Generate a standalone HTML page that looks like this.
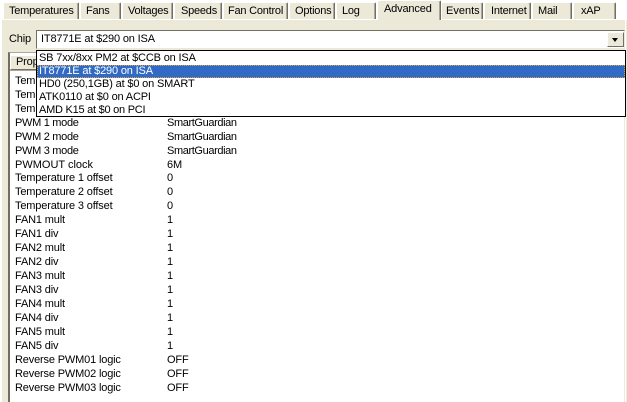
<!DOCTYPE html>
<html><head><meta charset="utf-8">
<style>
html,body{margin:0;padding:0;background:#fff}
#r{position:relative;width:627px;height:402px;overflow:hidden;background:#fff;font-family:"Liberation Sans",sans-serif;font-size:11px;color:#000;line-height:15px;white-space:nowrap;letter-spacing:-.16px}
#r div{position:absolute;box-sizing:border-box}
.tab{top:2px;height:17px;background:#ece9d8;border-top:1px solid #fff;border-left:1px solid #fff;border-right:1px solid #716f64;box-shadow:inset -1px 0 #aca899;border-radius:2px 2px 0 0;padding:1px 0 0 5px;letter-spacing:-.22px}
.t{left:15px}.v{left:167px}
.s{letter-spacing:-.38px}.p{letter-spacing:-.3px}
.i{left:0;width:588px;height:13px;padding-left:2px;line-height:13px}
</style></head><body><div id="r">
<div style="left:1px;top:19px;width:626px;height:383px;background:#ece9d8"></div>
<div style="left:1px;top:19px;width:626px;height:1px;background:#fff"></div>
<div style="left:1px;top:19px;width:1px;height:383px;background:#fff"></div>
<div style="left:625px;top:19px;width:1px;height:383px;background:#fff"></div>

<div class="tab" style="left:3px;width:76px;">Temperatures</div>
<div class="tab" style="left:80px;width:41px;">Fans</div>
<div class="tab" style="left:122px;width:51px;">Voltages</div>
<div class="tab" style="left:174px;width:48px;padding-left:6px">Speeds</div>
<div class="tab" style="left:223px;width:65px;padding-left:4px">Fan Control</div>
<div class="tab" style="left:289px;width:46px;">Options</div>
<div class="tab" style="left:336px;width:40px;padding-left:5px">Log</div>
<div class="tab" style="left:441px;width:42px;padding-left:4px;letter-spacing:0">Events</div>
<div class="tab" style="left:484px;width:47px;padding-left:6px">Internet</div>
<div class="tab" style="left:532px;width:40px;padding-left:5px">Mail</div>
<div class="tab" style="left:573px;width:43px;padding-left:7px">xAP</div>
<div class="tab" style="left:377px;top:0;width:64px;height:20px;padding:1px 0 0 6px;z-index:2;letter-spacing:-.16px">Advanced</div>

<div style="left:9px;top:32px">Chip</div>
<div style="left:36px;top:30px;width:589px;height:19px;background:#fff;border:1px solid #716f64;border-right-color:#ece9d8;border-bottom-color:#ece9d8;padding:1px 0 0 4px;z-index:1">IT8771E at $290 on ISA</div>
<div style="left:607px;top:32px;width:17px;height:15px;background:#ece9d8;border:1px solid;border-color:#fff #716f64 #716f64 #fff;z-index:2"></div>
<div style="left:612px;top:38px;width:0;height:0;border:3.5px solid transparent;border-top:4px solid #000;border-bottom:0;z-index:3"></div>

<div style="left:8px;top:52px;width:616px;height:350px;background:#fff;border-left:2px solid #716f64;border-top:1px solid #aca899"></div>
<div style="left:10px;top:55px;width:60px;height:15px;background:#ece9d8;border:1px solid;border-color:#fff #716f64 #716f64 #fff;padding:0 0 0 5px;line-height:13px">Prop</div>
<div style="left:10px;top:70px;width:614px;height:1px;background:#aca899"></div>

<div class="t" style="top:74px">Tem</div>
<div class="t" style="top:88px">Tem</div>
<div class="t" style="top:102px">Tem</div>
<div class="t p" style="top:116px">PWM 1 mode</div><div class="v s" style="top:116px">SmartGuardian</div>
<div class="t p" style="top:130px">PWM 2 mode</div><div class="v s" style="top:130px">SmartGuardian</div>
<div class="t p" style="top:144px">PWM 3 mode</div><div class="v s" style="top:144px">SmartGuardian</div>
<div class="t" style="top:158px;letter-spacing:0">PWMOUT clock</div><div class="v" style="top:158px">6M</div>
<div class="t" style="top:171px">Temperature 1 offset</div><div class="v" style="top:171px">0</div>
<div class="t" style="top:185px">Temperature 2 offset</div><div class="v" style="top:185px">0</div>
<div class="t" style="top:199px">Temperature 3 offset</div><div class="v" style="top:199px">0</div>
<div class="t" style="top:213px">FAN1 mult</div><div class="v" style="top:213px">1</div>
<div class="t" style="top:227px">FAN1 div</div><div class="v" style="top:227px">1</div>
<div class="t" style="top:241px">FAN2 mult</div><div class="v" style="top:241px">1</div>
<div class="t" style="top:255px">FAN2 div</div><div class="v" style="top:255px">1</div>
<div class="t" style="top:269px">FAN3 mult</div><div class="v" style="top:269px">1</div>
<div class="t" style="top:283px">FAN3 div</div><div class="v" style="top:283px">1</div>
<div class="t" style="top:297px">FAN4 mult</div><div class="v" style="top:297px">1</div>
<div class="t" style="top:311px">FAN4 div</div><div class="v" style="top:311px">1</div>
<div class="t" style="top:325px">FAN5 mult</div><div class="v" style="top:325px">1</div>
<div class="t" style="top:339px">FAN5 div</div><div class="v" style="top:339px">1</div>
<div class="t" style="top:353px">Reverse PWM01 logic</div><div class="v" style="top:353px">OFF</div>
<div class="t" style="top:367px">Reverse PWM02 logic</div><div class="v" style="top:367px">OFF</div>
<div class="t" style="top:381px">Reverse PWM03 logic</div><div class="v" style="top:381px">OFF</div>

<div style="left:36px;top:50px;width:590px;height:67px;background:#fff;border:1px solid #000;z-index:4">
<div class="i" style="top:1px;">SB 7xx/8xx PM2 at $CCB on ISA</div>
<div class="i" style="top:14px;background:#316ac5;color:#fff;outline:1px dotted #e0a040;outline-offset:-1px">IT8771E at $290 on ISA</div>
<div class="i" style="top:27px;">HD0 (250,1GB) at $0 on SMART</div>
<div class="i" style="top:40px;">ATK0110 at $0 on ACPI</div>
<div class="i" style="top:53px;letter-spacing:-.25px">AMD K15 at $0 on PCI</div>
</div>
</div></body></html>
